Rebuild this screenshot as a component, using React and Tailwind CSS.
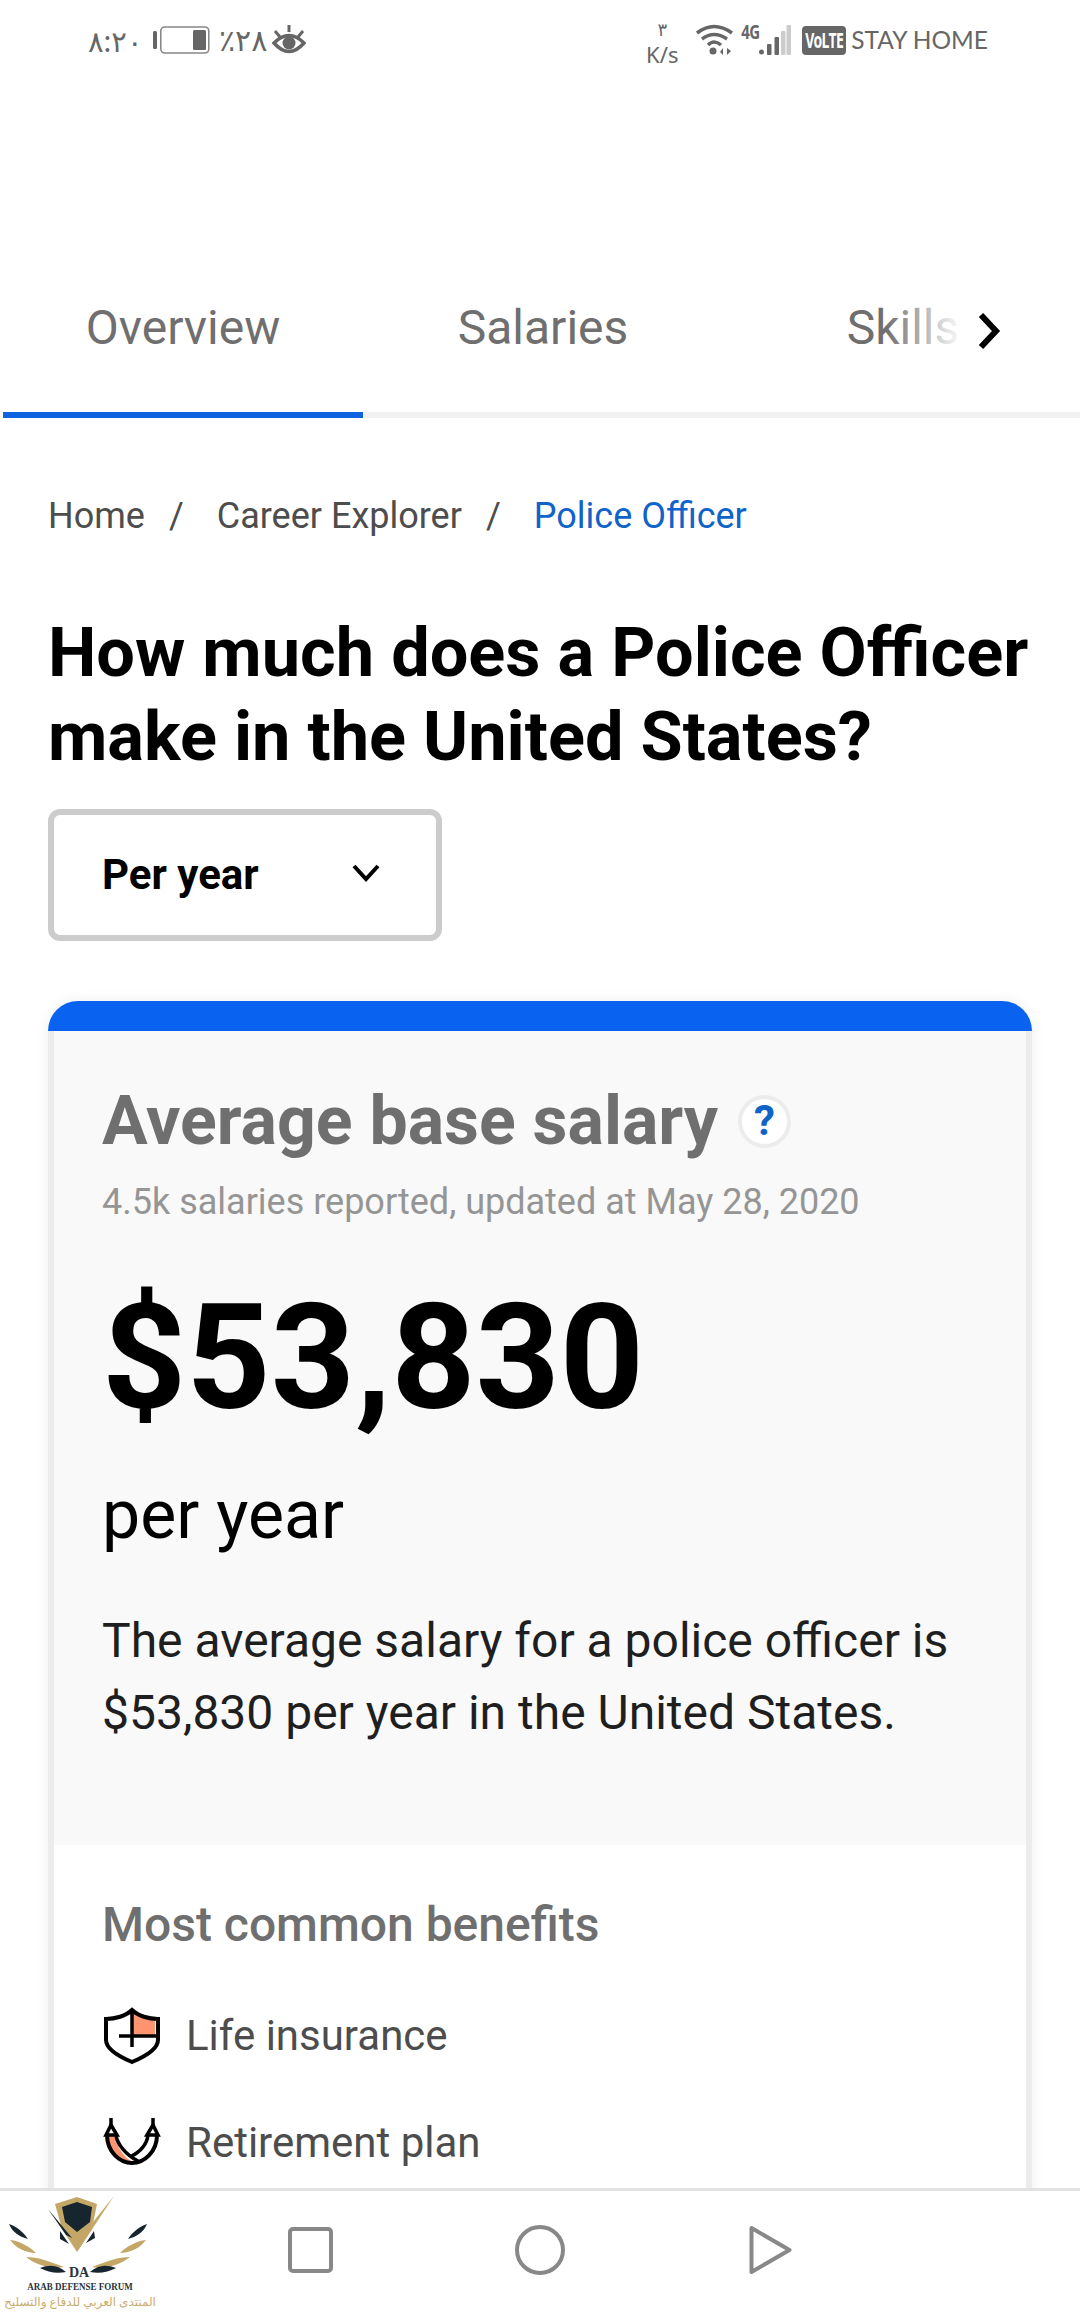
const sans = "font-['Roboto','Liberation_Sans',sans-serif]";

function StatusBar() {
  return (
    <div className="h-[80px] flex items-center justify-between pl-[88px] pr-[92px] text-[#666] font-['Noto_Sans','DejaVu_Sans',sans-serif]">
      <div className="flex items-center">
        <span className="text-[29px] w-[52px] leading-none whitespace-nowrap">۸:۲۰</span>
        <svg width="57" height="28" viewBox="0 0 57 28" className="ml-[13px]">
          <rect x="0" y="5" width="4" height="18" rx="1.5" fill="#666" />
          <rect x="7.8" y="1" width="48" height="26" rx="4" fill="none" stroke="#888" strokeWidth="1.6" />
          <rect x="40" y="4" width="13" height="20" rx="1.5" fill="#666" />
        </svg>
        <span className="text-[30px] ml-[9px] w-[48px] leading-none whitespace-nowrap">٪۲۸</span>
        <svg width="34" height="30" viewBox="0 0 34 30" className="ml-[5px]">
          <path d="M2 18 Q17 3 32 18 Q17 35 2 18Z" fill="none" stroke="#666" strokeWidth="3.5" />
          <circle cx="17" cy="18" r="6.5" fill="#666" />
          <path d="M3 6l5 6M17 0v7M31 6l-5 6" stroke="#666" strokeWidth="3" fill="none" />
        </svg>
      </div>
      <div className="flex items-center">
        <div className="flex flex-col items-center text-[22px] leading-[24px] mt-[2px] w-[36px]">
          <span className="text-[18px] leading-[26px]">۳</span>
          <span>K/s</span>
        </div>
        <svg width="37" height="32" viewBox="0 0 37 32" className="ml-[16px]">
          <path d="M1 9 Q18 -4 36 9" fill="none" stroke="#666" strokeWidth="3.5" />
          <path d="M6 15 Q18 6 31 15" fill="none" stroke="#666" strokeWidth="3.5" />
          <path d="M12 21 Q18 15 25 21" fill="none" stroke="#666" strokeWidth="3.5" />
          <circle cx="17" cy="27" r="3.5" fill="#666" />
          <path d="M27 31v-7l-3 4zM31 24v7l4-4z" fill="#666" />
        </svg>
        <div className="relative w-[50px] h-[32px] ml-[8px]">
          <span className="absolute left-0 top-[-1px] text-[15px] font-bold leading-none scale-y-125 origin-top tracking-[-0.5px]">4G</span>
          <svg width="32" height="30" viewBox="0 0 32 30" className="absolute left-[18px] top-[1px]">
            <circle cx="2.5" cy="27" r="2.5" fill="#666" />
            <rect x="8" y="19" width="4.5" height="11" rx="1" fill="#666" />
            <rect x="15.5" y="12" width="4.5" height="18" rx="1" fill="#666" />
            <rect x="22" y="6" width="4.5" height="24" rx="1" fill="#ccc" />
            <rect x="27.5" y="0" width="4.5" height="30" rx="1" fill="#ccc" />
          </svg>
        </div>
        <span className="ml-[11px] w-[44px] h-[29px] bg-[#666] text-white rounded-[4px] text-[14px] font-bold flex items-center justify-center leading-none">
          <span className="inline-block scale-y-150 tracking-[-0.6px]">VoLTE</span>
        </span>
        <span className="ml-[5px] text-[24.5px] leading-none font-['Lato',sans-serif] whitespace-nowrap">STAY HOME</span>
      </div>
    </div>
  );
}

function Tabs() {
  return (
    <div className="mt-[170px]">
      <div className="relative flex h-[162px] pb-[6px] pl-[3px] items-center text-[48px] text-[#6f6f6f] overflow-hidden">
        <span className="w-[360px] shrink-0 text-center">Overview</span>
        <span className="w-[360px] shrink-0 text-center">Salaries</span>
        <span className="w-[360px] shrink-0 text-center">Skills</span>
        <div className="absolute top-0 bottom-0 left-[885px] w-[195px] bg-gradient-to-r from-transparent to-white to-[40%]" />
        <svg width="24" height="38" viewBox="0 0 24 38" className="absolute left-[977px] top-[62px]">
          <path d="M4 3 L19 19 L4 35" fill="none" stroke="#000" strokeWidth="6" />
        </svg>
      </div>
      <div className="h-[6px] ml-[3px] bg-[#f1f1f1]">
        <div className="h-[6px] w-[360px] bg-[#1063e0]" />
      </div>
    </div>
  );
}

function ShieldIcon() {
  return (
    <svg width="60" height="60" viewBox="0 0 60 60">
      <path d="M31 8 C36 12 45 15 53 15 V31 H31Z" fill="#ff9470" />
      <path d="M30 5 C36 11 47 14 56 14 V35 C56 44 42 52 30 57 C18 52 4 44 4 35 V14 C13 14 24 11 30 5Z" fill="none" stroke="#000" strokeWidth="4" />
      <path d="M30 6 V42 M17 31 H56" stroke="#000" strokeWidth="3.5" fill="none" />
    </svg>
  );
}

function HammockIcon() {
  return (
    <svg width="60" height="48" viewBox="0 0 60 48">
      <path d="M5 17 C7 34 20 44 32 45 C22 40 14 28 13 17Z" fill="#ff9470" />
      <path d="M5 17 C5 34 18 45 30 45 C42 45 55 34 55 17" fill="none" stroke="#000" strokeWidth="4" />
      <path d="M14 17 C15 26 24 37 36 43" fill="none" stroke="#000" strokeWidth="3.5" />
      <path d="M46 17 C45 26 38 34 28 39" fill="none" stroke="#000" strokeWidth="3.5" />
      <path d="M4 17 L9 7 L15 17Z M45 17 L51 7 L56 17Z" fill="none" stroke="#000" strokeWidth="3.5" />
      <path d="M9 0V8 M51 0V8" stroke="#000" strokeWidth="3.5" />
    </svg>
  );
}

function Logo() {
  return (
    <div className="w-[160px] h-[121px] shrink-0 flex flex-col items-center">
      <svg width="160" height="88" viewBox="0 0 160 88" className="shrink-0">
        <path d="M55 13 L77 6 L97 13 L92 38 L77 61 L62 38Z" fill="#c4a766" />
        <path d="M62 16 L77 11 L92 16 L90 31 L77 41 L65 31Z" fill="#16252e" />
        <path d="M114 5 L77 61 L88 38 L97 26Z" fill="#c4a766" />
        <path d="M48 18 L72 47 L66 44Z" fill="#16252e" />
        <path d="M60 40 L69 53 L60 48Z M94 40 L86 52 L95 47Z" fill="#16252e" />
        <path d="M9 33 C18 36 24 42 28 48 C20 46 12 41 9 33Z M147 33 C138 36 132 42 128 48 C136 46 144 41 147 33Z" fill="#16252e" />
        <path d="M10 49 C20 50 30 56 36 62 C26 62 16 57 10 49Z M146 49 C136 50 126 56 120 62 C130 62 140 57 146 49Z" fill="#c4a766" />
        <path d="M26 66 C38 66 48 70 64 76 C50 78 36 74 26 66Z M130 66 C118 66 108 70 92 76 C106 78 120 74 130 66Z" fill="#c4a766" />
        <path d="M40 77 C50 73 58 74 66 81 C56 83 48 81 40 77Z M116 77 C106 73 98 74 90 81 C100 83 108 81 116 77Z" fill="#16252e" />
        <text x="79" y="86" textAnchor="middle" fontSize="14" fontWeight="700" fill="#26343d" fontFamily="Liberation Serif, serif">DA</text>
      </svg>
      <span className="mt-[1px] text-[9px] leading-[12px] font-bold font-['Liberation_Serif',serif] text-[#26343d] whitespace-nowrap scale-y-125">ARAB DEFENSE FORUM</span>
      <span className="text-[12px] leading-[19px] text-[#c9ad6e] font-['Noto_Sans','DejaVu_Sans',sans-serif] whitespace-nowrap" dir="rtl">المنتدى العربي للدفاع والتسليح</span>
    </div>
  );
}

function NavBar() {
  return (
    <div className="absolute left-0 right-0 bottom-0 h-[124px] bg-white border-t-[3px] border-[#e2e2e2] flex items-center">
      <Logo />
      <svg width="45" height="46" viewBox="0 0 45 46" className="ml-[128px] mb-[3px]">
        <rect x="2" y="2" width="41" height="42" rx="3" fill="none" stroke="#888" strokeWidth="4" />
      </svg>
      <svg width="50" height="50" viewBox="0 0 50 50" className="ml-[182px] mb-[3px]">
        <circle cx="25" cy="25" r="23" fill="none" stroke="#888" strokeWidth="4" />
      </svg>
      <svg width="43" height="50" viewBox="0 0 43 50" className="ml-[184px] mb-[3px]">
        <path d="M2.5 3 L40.5 25 L2.5 47Z" fill="none" stroke="#888" strokeWidth="4" strokeLinejoin="round" />
      </svg>
    </div>
  );
}

export default function App() {
  return (
    <div className={`relative w-[1080px] h-[2312px] overflow-hidden bg-white ${sans}`}>
      <StatusBar />
      <Tabs />

      <div className="px-[48px]">
        <div className="flex items-center mt-[76px] text-[36px] text-[#4d4d4d] leading-[44px]">
          <span>Home</span>
          <span className="ml-[24px]">/</span>
          <span className="ml-[33px]">Career Explorer</span>
          <span className="ml-[24px]">/</span>
          <span className="ml-[33px] text-[#1063c9]">Police Officer</span>
        </div>

        <h1 className="mt-[73px] text-[68.5px] leading-[84px] font-bold text-black whitespace-nowrap">
          How much does a Police Officer
          <br />
          make in the United States?
        </h1>

        <div className="relative mt-[30px] w-[394px] h-[132px] border-[6px] border-[#ccc] rounded-[12px] flex items-center pl-[48px] pb-[2px] text-[42px] font-bold text-black">
          Per year
          <svg width="28" height="20" viewBox="0 0 28 20" className="absolute left-[298px] top-[48px]">
            <path d="M2 3 L14 16 L26 3" fill="none" stroke="#000" strokeWidth="4" />
          </svg>
        </div>

        <div className="mt-[60px] w-[984px] shadow-[0_0_14px_rgba(0,0,0,0.07)] rounded-t-[30px]">
          <div className="h-[30px] bg-[#0a63f0] rounded-t-[30px]" />
          <div className="border-x-[6px] border-[#ececec]">
            <div className="bg-[#f9f9f9] h-[814px] pl-[48px] pt-[48px]">
              <div className="flex items-center">
                <span className="text-[68px] leading-[84px] font-bold text-[#6f6f6f]">Average base salary</span>
                <span className="ml-[20px] w-[53px] h-[53px] rounded-full bg-white border-[4px] border-[#ececec] flex items-center justify-center text-[42px] font-bold text-[#1063c9] leading-none">?</span>
              </div>
              <p className="mt-[17px] text-[36px] leading-[44px] text-[#959595]">4.5k salaries reported, updated at May 28, 2020</p>
              <p className="mt-[49px] text-[147px] leading-[170px] font-bold text-black">$53,830</p>
              <p className="mt-[30px] text-[68px] leading-[84px] text-black">per year</p>
              <p className="mt-[48px] text-[48px] leading-[72px] text-[#1f1f1f] whitespace-nowrap">
                The average salary for a police officer is
                <br />
                $53,830 per year in the United States.
              </p>
            </div>
            <div className="bg-white pl-[48px] pt-[50px] h-[440px]">
              <p className="text-[48px] leading-[60px] font-medium text-[#6f6f6f]">Most common benefits</p>
              <div className="mt-[50px] flex items-center gap-[24px] h-[60px]">
                <ShieldIcon />
                <span className="text-[42px] text-[#4d4d4d]">Life insurance</span>
              </div>
              <div className="mt-[47px] flex items-center gap-[24px] h-[60px]">
                <HammockIcon />
                <span className="text-[42px] text-[#4d4d4d]">Retirement plan</span>
              </div>
            </div>
          </div>
        </div>
      </div>

      <NavBar />
    </div>
  );
}
